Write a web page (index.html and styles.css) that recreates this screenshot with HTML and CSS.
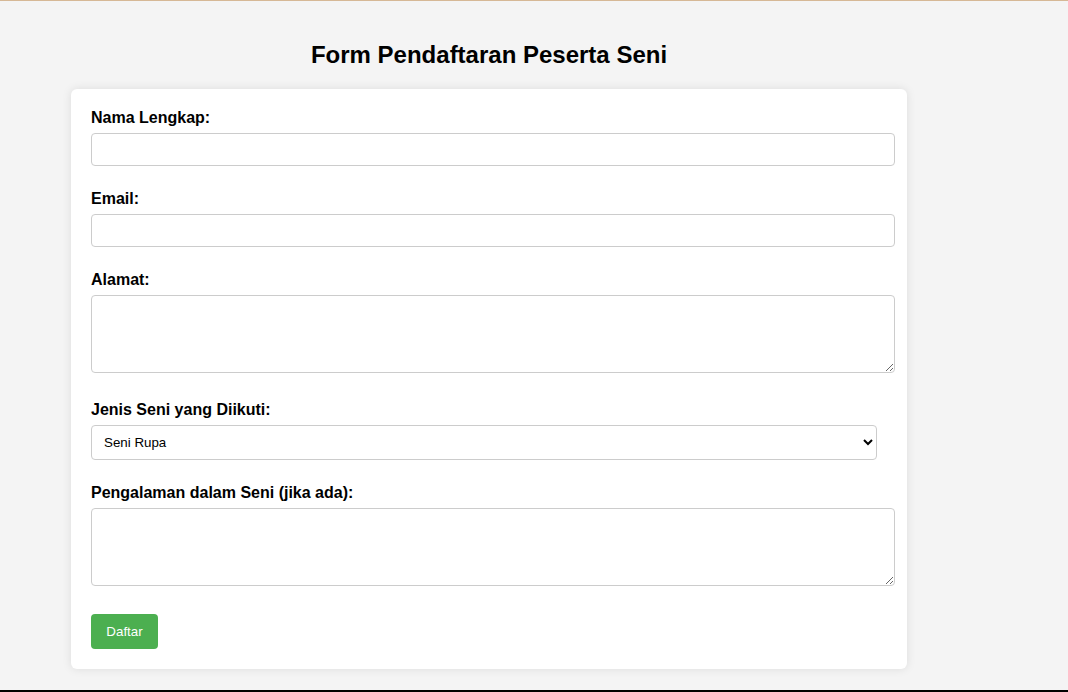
FILE: index.html
```html
<!DOCTYPE html>
<html lang="id">
<head>
<meta charset="utf-8">
<title>Form Pendaftaran Peserta Seni</title>
<link rel="stylesheet" href="styles.css">
</head>
<body>
<div class="page">
  <h1 class="title">Form Pendaftaran Peserta Seni</h1>
  <form class="card">
    <label class="label" for="nama">Nama Lengkap:</label>
    <input class="field" type="text" id="nama">
    <label class="label" for="email">Email:</label>
    <input class="field" type="email" id="email">
    <label class="label" for="alamat">Alamat:</label>
    <textarea class="area" id="alamat"></textarea>
    <label class="label" for="jenis">Jenis Seni yang Diikuti:</label>
    <select class="choice" id="jenis">
      <option>Seni Rupa</option>
      <option>Seni Musik</option>
      <option>Seni Tari</option>
      <option>Seni Teater</option>
    </select>
    <label class="label" for="pengalaman">Pengalaman dalam Seni (jika ada):</label>
    <textarea class="area" id="pengalaman"></textarea>
    <button class="submit" type="button">Daftar</button>
  </form>
</div>
</body>
</html>
```
FILE: styles.css
```css
html, body {
  margin: 0;
  padding: 0;
}
body {
  background: #f4f4f4;
  font-family: "Liberation Sans", Arial, sans-serif;
  color: #000;
  min-height: 692px;
  box-sizing: border-box;
  border-top: 1px solid #d6b896;
  border-bottom: 2px solid #000;
  padding-top: 20px;
}
.page {
  width: 836px;
  margin-left: 71px;
}
.title {
  margin: 20px 0;
  font-size: 24px;
  line-height: 28px;
  text-align: center;
  font-weight: bold;
}
.card {
  background: #fff;
  border-radius: 6px;
  box-shadow: 0 0 10px rgba(0, 0, 0, 0.1);
  padding: 20px;
  display: flex;
  flex-direction: column;
  align-items: flex-start;
}
.label {
  display: block;
  font-weight: bold;
  font-size: 16px;
  line-height: 17px;
  margin-bottom: 7px;
}
.field, .area, .choice {
  box-sizing: border-box;
  border: 1px solid #ccc;
  border-radius: 4px;
  font-family: "Liberation Sans", Arial, sans-serif;
  font-size: 13.333px;
  background: #fff;
  margin: 0;
}
.field {
  width: 804px;
  height: 33px;
  padding: 8px;
  margin-bottom: 24px;
}
.area {
  width: 804px;
  height: 78px;
  padding: 8px;
  margin-bottom: 28px;
}
.choice {
  width: 786px;
  height: 35px;
  padding: 0 8px;
  color: #000;
  margin-bottom: 24px;
}
.submit {
  background: #4caf50;
  color: #fff;
  border: none;
  border-radius: 4px;
  font-family: "Liberation Sans", Arial, sans-serif;
  font-size: 13.333px;
  height: 35px;
  width: 67px;
  padding: 0;
}
```
